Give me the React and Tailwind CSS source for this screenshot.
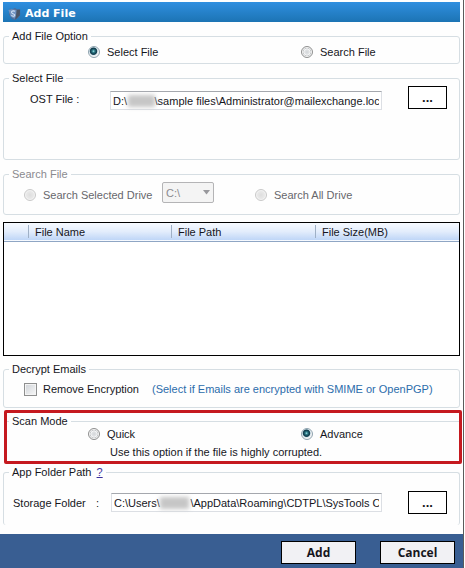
import React, { useState } from "react";

const COLUMNS = [
  { label: "", width: "w-6" },
  { label: "File Name", width: "w-[143px]" },
  { label: "File Path", width: "w-[144px]" },
  { label: "File Size(MB)", width: "" },
];

const RADIO =
  "appearance-none size-3 shrink-0 rounded-full border border-[#8e8f8f] bg-[radial-gradient(circle,#d2d5d8_0%,#e3e5e7_35%,#ffffff_45%,#c4c7c9_54%,#f4f4f4_64%)] checked:border-[#8fa3af] checked:bg-[radial-gradient(circle_at_45%_42%,#a8e4e8_0%,#2f7f8c_16%,#123c4c_36%,#1c4a5a_42%,#d9e6ee_52%,#f4f4f4_64%)] disabled:border-[#c9c9c9] disabled:bg-[radial-gradient(circle,#dedede_0%,#e8e8e8_50%,#f6f6f6_70%)]";

const Radio = ({ label, ...props }) => (
  <label className="flex items-center gap-[7px] whitespace-nowrap">
    <input type="radio" className={RADIO} {...props} />
    {label}
  </label>
);

const Group = ({ title, className = "", children, ...props }) => (
  <fieldset className={`min-w-0 rounded-[3px] border border-[#d6dee3] ${className}`} {...props}>
    <legend className="ml-[5px] px-[3px]">{title}</legend>
    {children}
  </fieldset>
);

// Path box with the user's folder blurred out
const PathField = ({ id, value, maskClass }) => (
  <div className="relative flex-1 min-w-0">
    <input
      id={id}
      type="text"
      defaultValue={value}
      className="block w-full h-[19px] pl-[2px] pr-[2px] border border-[#dcdfe4] border-t-[#a5a8ae] bg-white outline-none"
    />
    <span className={`absolute top-1 h-3 bg-[#c6c6c6] blur-[2px] ${maskClass}`} />
  </div>
);

const BrowseButton = ({ label }) => (
  <button
    type="button"
    aria-label={label}
    className="w-[39px] h-[23px] shrink-0 border border-black bg-white text-[13px] font-bold leading-4"
  >
    ...
  </button>
);

const FooterButton = ({ children }) => (
  <button
    type="button"
    className="w-[75px] h-[23px] border border-black bg-[#f1f1f4] font-['Open_Sans',sans-serif] text-xs font-bold leading-4"
  >
    {children}
  </button>
);

// Shield with a small S on a grey gear
const AppIcon = () => (
  <svg width="13" height="14" viewBox="0 0 15 15" aria-hidden="true">
    <path d="M2 1.500 5 2 8 .5l2.500 1.500 3-.2.8 6-2.300 4L8 14.500 4.500 13 1 8Z" fill="#4c6b98" />
    <path d="M.5 3 4 2l6 1 .5 5-3 5L3 10.500Z" fill="#7193c1" />
    <path d="M10 3 14 2.500l-.5 6.500-5 5Z" fill="#4a5566" />
    <path d="M8 4.500C6.500 3.300 3.500 4 4.200 6s3.800.8 3.600 2.800S4.500 10 4 9" fill="none" stroke="#d3e3f5" strokeWidth="1.200" />
  </svg>
);

export default function App() {
  const [source, setSource] = useState("select");
  const [mode, setMode] = useState("advance");

  return (
    <main className="mr-px border-r border-[#5b5b5b] bg-[#fefefe] pt-[2px] font-['Liberation_Sans',sans-serif] text-[11px] leading-4 text-[#16161c]">
      <div className="px-[3px]">
        <header className="flex h-5 items-center gap-1 bg-linear-to-b from-[#2f8fe0] to-[#1c74b4] pl-[5px] pt-1 text-white">
          <AppIcon />
          <h1 className="font-['DejaVu_Sans',sans-serif] text-[11px] font-bold">Add File</h1>
        </header>

        <Group title="Add File Option" className="mt-[6px] h-9">
          <div className="flex pl-[84px]">
            <div className="w-[213px]">
              <Radio label="Select File" name="source" checked={source === "select"} onChange={() => setSource("select")} />
            </div>
            <Radio label="Search File" name="source" checked={source === "search"} onChange={() => setSource("search")} />
          </div>
        </Group>

        <Group title="Select File" className="mt-[6px] h-[90px]">
          <div className="flex pl-[26px] pr-3">
            <label htmlFor="ost" className="w-20 shrink-0 pt-[5px]">OST File :</label>
            <div className="flex min-w-0 flex-1 pt-[5px]">
              <PathField
                id="ost"
                value={"D:\\" + "\u00a0".repeat(9) + "\\sample files\\Administrator@mailexchange.loc"}
                maskClass="left-[18px] w-[27px]"
              />
            </div>
            <div className="ml-[26px] flex">
              <BrowseButton label="Browse OST file" />
            </div>
          </div>
        </Group>

        <Group title="Search File" disabled className="mt-[6px] h-[49px] text-[#8a8a8f]">
          <div className="flex items-center pl-5 text-[#67676c]">
            <div className="w-[138px] pt-1">
              <Radio label="Search Selected Drive" name="drive" />
            </div>
            <div className="relative w-[52px]">
              <select
                aria-label="Drive"
                className="block h-[21px] w-full appearance-none rounded-[2px] border border-[#b4b4b6] bg-[#f4f4f4] pl-[3px] leading-4 text-[#8a8a8f] opacity-100"
              >
                <option>C:\</option>
              </select>
              <svg className="pointer-events-none absolute right-1 top-2" width="7" height="5" viewBox="0 0 7 5">
                <path d="M0 0h7L3.500 4.500Z" fill="#98989c" />
              </svg>
            </div>
            <div className="ml-[41px] pt-1">
              <Radio label="Search All Drive" name="drive" />
            </div>
          </div>
        </Group>

        <div className="mt-[7px] h-[134px] border border-black bg-white">
          <table className="w-full table-fixed border-collapse">
            <thead>
              <tr className="h-[18px] border-b border-[#8fa6c4] bg-linear-to-b from-[#f7faff] via-[#e3edfc] to-[#bfd6f7]">
                {COLUMNS.map((col, i) => (
                  <th key={i} scope="col" className={`p-0 text-left font-normal ${col.width}`}>
                    <span className={`block h-[13px] leading-[14px] ${i ? "border-l border-[#9fb0c6] pl-[6px]" : ""}`}>{col.label}</span>
                  </th>
                ))}
              </tr>
            </thead>
          </table>
        </div>

        <Group title="Decrypt Emails" className="mt-[5px] h-[47px]">
          <div className="flex items-center pl-5 pt-1">
            <label className="flex w-32 shrink-0 items-center gap-[6px]">
              <input
                type="checkbox"
                className="size-[13px] shrink-0 appearance-none border border-[#8e8f8f] bg-linear-to-br from-[#cfd3d8] to-[#f8f8f8] shadow-[inset_0_0_0_1px_#f4f4f4] checked:bg-[#2f7f8c]"
              />
              Remove Encryption
            </label>
            <span className="whitespace-nowrap text-[#2b6cab]">(Select if Emails are encrypted with SMIME or OpenPGP)</span>
          </div>
        </Group>
      </div>

      <section className="ml-1 mr-px mt-[2px] h-[54px] rounded-[2px] border-3 border-[#c5191f]">
        <fieldset className="min-w-0 border-t border-[#d6dee3]">
          <legend className="ml-[2px] px-[3px]">Scan Mode</legend>
          <div className="-mt-[3px] flex pl-[81px]">
            <div className="w-[213px]">
              <Radio label="Quick" name="mode" checked={mode === "quick"} onChange={() => setMode("quick")} />
            </div>
            <Radio label="Advance" name="mode" checked={mode === "advance"} onChange={() => setMode("advance")} />
          </div>
          <p className="mt-[2px] pl-[103px]">Use this option if the file is highly corrupted.</p>
        </fieldset>
      </section>

      <div className="px-[3px]">
        <Group
          title={
            <>
              App Folder Path <a href="#help" className="ml-[2px] text-[#3a2f9c] underline">?</a>
            </>
          }
          className="h-[61px] border-b-0"
        >
          <div className="flex items-center pl-[9px] pr-3 pt-[11px]">
            <label htmlFor="storage" className="flex w-[98px] shrink-0">
              <span className="w-[83px]">Storage Folder</span>:
            </label>
            <PathField
              id="storage"
              value={"C:\\Users\\" + "\u00a0".repeat(10) + "\\AppData\\Roaming\\CDTPL\\SysTools Outlook Recovery"}
              maskClass="left-[49px] w-[29px]"
            />
            <div className="ml-[26px] flex">
              <BrowseButton label="Browse storage folder" />
            </div>
          </div>
        </Group>
      </div>

      <footer className="mt-[9px] flex justify-end gap-6 bg-[#395e92] pb-1 pr-2 pt-[7px]">
        <FooterButton>Add</FooterButton>
        <FooterButton>Cancel</FooterButton>
      </footer>
    </main>
  );
}
